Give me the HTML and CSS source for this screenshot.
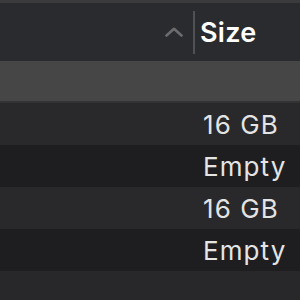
FILE: index.html
```html
<!DOCTYPE html>
<html lang="en">
<head>
    <meta charset="UTF-8">
    <meta name="viewport" content="width=device-width, initial-scale=1.0">
    <title>Size Column</title>
    <link rel="stylesheet" href="styles.css">
</head>
<body>

    <div class="top-strip"></div>
    <div class="header">
        <svg class="chevron" width="18" height="10" viewBox="0 0 18 10">
            <polyline points="1.5,8.5 9,1.8 16.5,8.5" fill="none" stroke="#6c6c6f" stroke-width="2.6" stroke-linecap="round" stroke-linejoin="round"/>
        </svg>
        <div class="divider"></div>
        <div class="title">Size</div>
    </div>
    <div class="band"></div>

    <div class="rows">
        <div class="row">16 GB</div>
        <div class="row alt">Empty</div>
        <div class="row">16 GB</div>
        <div class="row alt">Empty</div>
    </div>

</body>
</html>
```
FILE: styles.css
```css
body {
    font-family: Inter, "Noto Sans", sans-serif;
    background-color: #28282b;
    margin: 0;
}
.top-strip {
    height: 3px;
    background: #3b3b3e;
}
.header {
    height: 58px;
    background: #2a2b2e;
    display: flex;
    align-items: center;
    padding-left: 165px;
}
.chevron {
    margin-top: 0;
}
.divider {
    width: 2px;
    height: 43px;
    background: #505155;
    margin-left: 10px;
}
.title {
    margin-left: 5px;
    color: #ffffff;
    font-size: 27px;
    font-weight: 600;
    letter-spacing: 0.3px;
}
.band {
    height: 40px;
    background: #464646;
    border-bottom: 2px solid #333335;
}
.row {
    height: 42px;
    display: flex;
    align-items: center;
    padding-left: 203px;
    color: #e4e4e4;
    font-size: 26px;
    letter-spacing: 1.1px;
    background: #29292c;
}
.row.alt {
    background: #1e1e20;
}
```
